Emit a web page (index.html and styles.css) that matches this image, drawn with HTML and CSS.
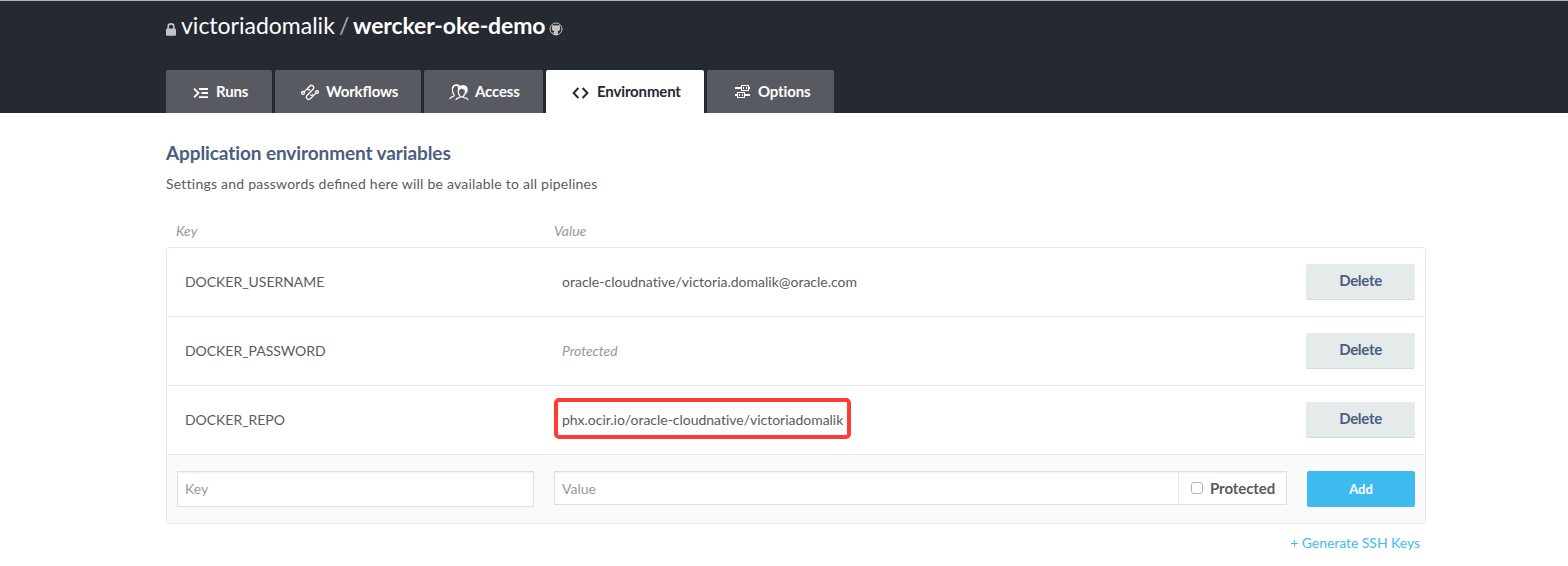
FILE: index.html
```html
<!DOCTYPE html>
<html lang="en">
<head>
<meta charset="utf-8">
<title>wercker-oke-demo</title>
<link rel="stylesheet" href="styles.css">
</head>
<body>
<header class="header">
  <h1 class="title">
    <svg class="lock" width="10" height="13" viewBox="0 0 10 13"><path d="M2.2 6V3.4Q2.2 .9 5 .9T7.8 3.4V6" fill="none" stroke="#c3c4c6" stroke-width="1.6"/><rect y="5.5" width="10" height="7.2" rx="1" fill="#c3c4c6"/></svg>
    <span class="owner">victoriadomalik</span>
    <span class="slash">/</span>
    <span class="repo">wercker-oke-demo</span>
    <svg class="github" width="14" height="14" viewBox="0 0 14 14"><circle cx="7" cy="7" r="6" fill="none" stroke="#c3c4c6"/><path d="M3.4 2.8 5 3.4Q7 3 9 3.4L10.6 2.8 10.9 4.8Q12 8.4 8.6 9.3L9 10V13H5V11.4Q3.8 11.7 3 10.2 4.3 10.9 5 10L5.4 9.3Q2 8.4 3.1 4.8Z" fill="#c3c4c6"/></svg>
  </h1>
  <nav class="tabs">
    <a class="tab runs"><svg width="16" height="12" viewBox="0 0 16 12" fill="none" stroke="currentColor" stroke-width="1.8"><path d="M1 1.6 5.5 6 1 10.4M6 2h9M8.5 6H15M6 10.2h9"/></svg><span>Runs</span></a>
    <a class="tab workflows"><svg width="18" height="17" viewBox="0 0 18 17" fill="none" stroke="currentColor" stroke-width="1.3"><circle cx="2" cy="8.9" r="1.4"/><circle cx="16" cy="8" r="1.4"/><path d="M3.2 7.9 8.6 2.2Q10.3 .5 12 2T12 5.2L6.2 11.2Q4.6 13 6 14.7T9.5 14.6L14.9 9"/><path d="M8.9 6.2Q7.6 4.9 6.3 6.1M9.2 10.8Q10.6 12 12 10.5"/></svg><span>Work<span class="joined">fl</span>ows</span></a>
    <a class="tab access"><svg width="20" height="17" viewBox="0 0 20 17" fill="none" stroke="currentColor" stroke-width="1.2"><path d="M.6 14.8Q2 12.8 4.3 12.3 5.7 11.8 4.8 10.4 3.1 8.2 3.5 4.4 3.8 1.1 7.2 1.1 9 .6 10.2 2"/><path d="M6.6 15.8Q7.8 14 10.2 13.6 11.6 13 10.8 11.7 8.9 9.8 9.3 6.4L12 3.8 16.4 5.8Q17.1 9.5 14.6 11.8 13.8 13.3 15.2 13.7 18 14 19.2 15.8M10.7 12.2Q12.8 13.7 14.7 12.1"/><path d="M8.8 7.6Q8.5 2.2 12.2 1.6 14.1.4 16.3 1.5 19.6 3.2 18.5 7.6L17.6 10 16.5 5.2Q14.2 5.2 12.6 3.6 11.3 5.5 9.8 5.8Z" fill="currentColor" stroke="none"/><path d="M4 4.3Q4 1.3 7 1.2L10 2 8.5 3.2"/></svg><span>Access</span></a>
    <a class="tab environment active"><svg width="17" height="12" viewBox="0 0 17 12" fill="none" stroke="currentColor" stroke-width="2"><path d="M6.4 1 1.6 6 6.4 11M10.6 1 15.4 6 10.6 11"/></svg><span>Environment</span></a>
    <a class="tab options"><svg width="15" height="14" viewBox="0 0 15 14" fill="none" stroke="currentColor"><path d="M0 3h6M14 3h1M0 10h2M10 10h5" stroke-width="2"/><rect x="6.5" y=".5" width="7" height="5"/><rect x="2.5" y="7.5" width="7" height="5"/><path d="M8.5 2v2M11.5 2v2M4.5 9v2M7.5 9v2"/></svg><span>Options</span></a>
  </nav>
</header>
<main class="content">
  <h2 class="heading"><span>Application environment variables</span></h2>
  <p class="intro"><span>Settings and passwords de<span class="joined">fi</span>ned here will be available to all pipelines</span></p>
  <div class="labels"><span>Key</span><span>Value</span></div>
  <section class="table">
    <div class="row"><span class="key">DOCKER_USERNAME</span><span class="value">oracle-cloudnative/victoria.domalik@oracle.com</span><button class="delete">Delete</button></div>
    <div class="row"><span class="key">DOCKER_PASSWORD</span><span class="value protected">Protected</span><button class="delete">Delete</button></div>
    <div class="row"><span class="key">DOCKER_REPO</span><span class="value marked">phx.ocir.io/oracle-cloudnative/victoriadomalik</span><button class="delete">Delete</button></div>
    <div class="row form">
      <div class="field key-field">Key</div>
      <div class="field value-field"><span class="placeholder">Value</span><label class="protect"><i class="checkbox"></i><span>Protected</span></label></div>
      <button class="add">Add</button>
    </div>
  </section>
  <a class="generate"><span>+ Generate SSH Keys</span></a>
</main>
</body>
</html>
```
FILE: styles.css
```css
*, *::after { box-sizing: border-box; }
body { margin: 0; background: #fff; color: #5b5b5b; font: 14px/20px Lato, sans-serif; font-variant-ligatures: none; overflow: hidden; }
.joined { font-variant-ligatures: common-ligatures; letter-spacing: 0; }
.header { height: 113px; padding-left: 166px; border-top: 1px solid #b2b3b5; background: #252932; display: flex; flex-direction: column; justify-content: space-between; }
.title { margin: 0; padding-top: 10px; height: 44px; display: flex; align-items: flex-start; color: #fff; font-size: 23px; line-height: 30px; font-weight: 400; white-space: nowrap; }
.title span { margin-top: -1px; }
.lock { margin: 12px 5px 0 0; }
.owner { width: 154px; letter-spacing: 0; }
.slash { width: 18px; padding-left: 4px; color: #a8a9ad; }
.repo { width: 193px; font-weight: 700; letter-spacing: -.12px; }
.github { margin: 11px 0 0 3px; }
.tabs { display: flex; gap: 3px; height: 43px; }
.tab { display: flex; align-items: center; background: #585a61; color: #fff; border-radius: 2px 2px 0 0; font-size: 15px; font-weight: 700; letter-spacing: -.15px; white-space: nowrap; }
.tab > span { margin-top: -1px; }
.tab svg { flex: none; margin-top: 2px; }
.runs { width: 106px; padding-left: 27px; }
.runs svg { margin-right: 7px; }
.workflows { width: 146px; padding-left: 26px; }
.workflows svg { margin-right: 7px; }
.access { width: 119px; padding-left: 25px; }
.access svg { margin-right: 6px; }
.environment { width: 158px; padding-left: 26px; }
.environment svg { margin-right: 8px; }
.options { width: 127px; padding-left: 28px; }
.tab.options svg { margin: 0 8px 0 0; }
.active { background: #fff; color: #252932; }
.content { width: 1260px; margin-left: 166px; display: flex; flex-direction: column; }
.heading { margin: 28px 0 0; color: #4b5d7e; font-size: 19px; line-height: 24px; font-weight: 700; letter-spacing: -.1px; }
.intro { margin: 9px 0 0; letter-spacing: .23px; }
.labels { display: grid; grid-template-columns: 378px 1fr; margin-top: 27px; padding-left: 10px; font-style: italic; color: #999; }
.table { margin-top: 6px; border: 1px solid #e5eaea; border-radius: 4px; height: 277px; overflow: hidden; }
.row { height: 69px; display: grid; grid-template-columns: 377px 1fr 109px; align-items: center; padding: 0 10px 0 18px; border-bottom: 1px solid #e5eaea; }
.key { letter-spacing: -.03px; }
.value { justify-self: start; white-space: nowrap; }
.protected { font-style: italic; color: #999; letter-spacing: -.08px; }
.marked { position: relative; letter-spacing: -.02px; }
.marked::after { content: ""; position: absolute; left: -8px; top: -12px; width: 297px; height: 41px; border: 4px solid #ff3b35; border-radius: 5px; }
button { font: 700 15px/20px Lato, sans-serif; padding: 0; border: 0; border-radius: 2px; height: 36px; }
.delete { background: #e5ebeb; color: #4b5d7e; border-bottom: 1px solid #d4dada; padding-bottom: 3px; letter-spacing: -.3px; }
.form { border-bottom: 0; height: 68px; background: #fafafa; grid-template-columns: 357px 733px 108px; column-gap: 20px; padding: 0 10px; align-items: start; padding-top: 16px; }
.field { background: #fff; border: 1px solid #dce1e1; box-shadow: inset 0 1px 2px #edf1f1; color: #999; }
.key-field { height: 36px; line-height: 34px; padding-left: 7px; }
.value-field { height: 34px; display: flex; line-height: 34px; }
.placeholder { flex: 1; padding-left: 7px; }
.protect { width: 108px; border-left: 1px solid #e5eaea; display: flex; align-items: center; padding-left: 12px; color: #5b5b5b; font-size: 15px; font-weight: 700; letter-spacing: -.07px; }
.checkbox { width: 12px; height: 12px; border: 1px solid #b5b5b5; border-radius: 3px; margin-right: 7px; flex: none; }
.add { background: #3fbcef; color: #fff; font-size: 13px; }
.generate { margin: 9px 6px 0 0; text-align: right; color: #3fbcef; letter-spacing: -.05px; }
```
